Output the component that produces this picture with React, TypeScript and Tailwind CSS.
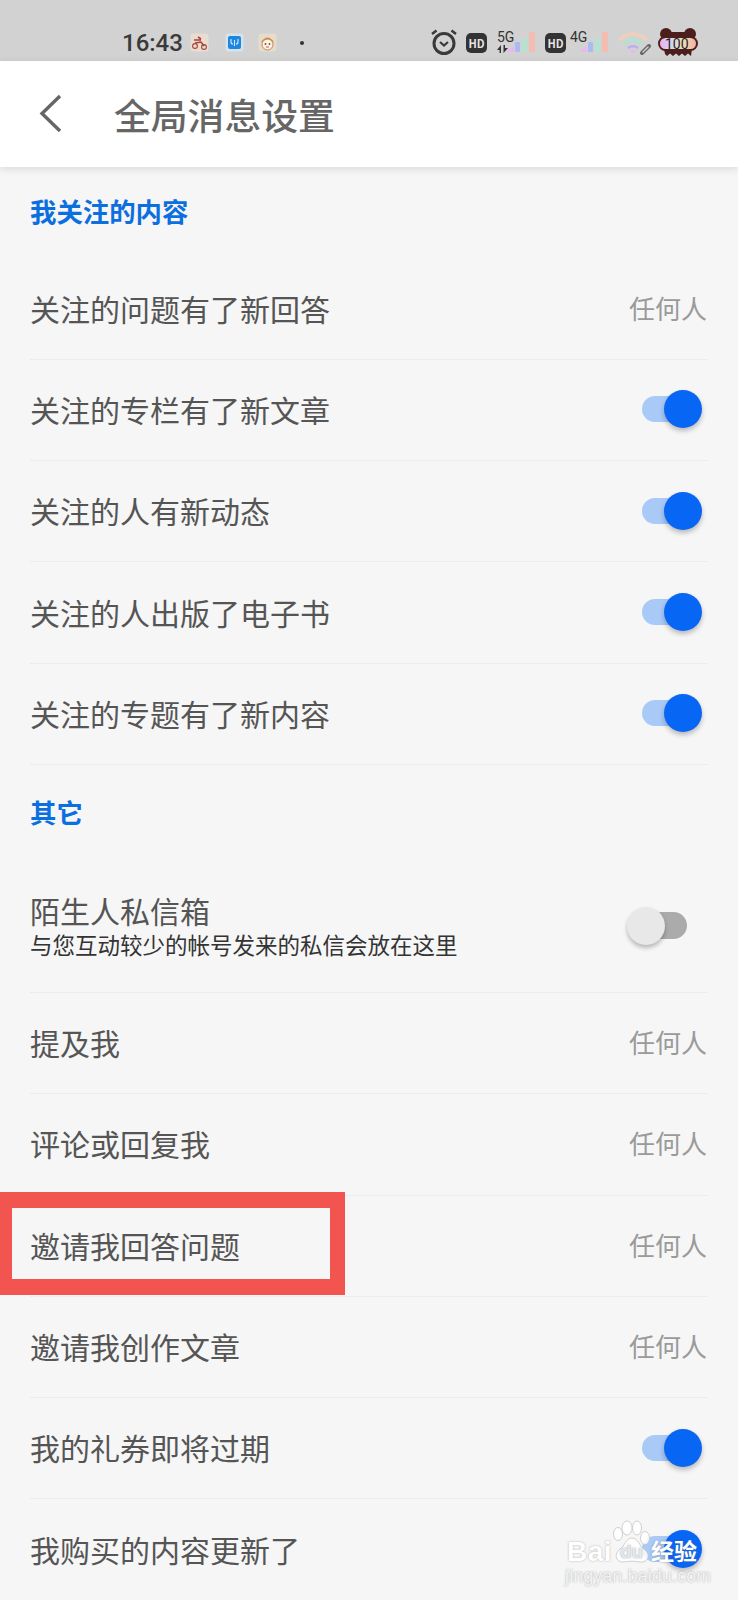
import React from 'react';

type Row = { label: string; value?: string; on?: boolean };

const followRows: Row[] = [
  { label: '关注的问题有了新回答', value: '任何人' },
  { label: '关注的专栏有了新文章', on: true },
  { label: '关注的人有新动态', on: true },
  { label: '关注的人出版了电子书', on: true },
  { label: '关注的专题有了新内容', on: true },
];

const otherRows: Row[] = [
  { label: '提及我', value: '任何人' },
  { label: '评论或回复我', value: '任何人' },
  { label: '邀请我回答问题', value: '任何人' },
  { label: '邀请我创作文章', value: '任何人' },
  { label: '我的礼券即将过期', on: true },
  { label: '我购买的内容更新了', on: true },
];

const SwitchOn = () => (
  <div className="relative w-[60px] h-[38px] flex items-center">
    <div className="w-[48px] h-[26px] rounded-full bg-[#a9c9f7]" />
    <div className="absolute right-0 top-0 w-[38px] h-[38px] rounded-full bg-[#0766f4] shadow-[0_3px_5px_rgba(0,0,0,0.25)]" />
  </div>
);

const SwitchOff = () => (
  <div className="relative w-[60px] h-[38px] flex items-center justify-end">
    <div className="w-[50px] h-[27px] rounded-full bg-[#ababab]" />
    <div className="absolute left-0 top-0 w-[38px] h-[38px] rounded-full bg-[#e8e8e8] shadow-[0_3px_4px_rgba(0,0,0,0.25)]" />
  </div>
);

const SettingRow = ({ label, value, on }: Row) => (
  <div className="h-[101.3px] border-b border-[#ececec] flex items-center justify-between">
    <span className="pb-[2px] text-[30px] leading-none text-[#555555]">{label}</span>
    {value ? <span className="pb-[2px] pr-[1px] text-[26px] leading-none text-[#9a9a9a]">{value}</span> : null}
    {on ? <div className="mr-[6px] -mt-[1px]"><SwitchOn /></div> : null}
  </div>
);

const SectionTitle = ({ text, className }: { text: string; className: string }) => (
  <div className={`flex items-center ${className}`}>
    <span className="text-[26.4px] leading-none font-bold text-[#0b6fe0]">{text}</span>
  </div>
);

const BikeIcon = () => (
  <svg width="19" height="19" viewBox="0 0 19 19" fill="none" stroke="#a8433a">
    <rect x="0.5" y="0.5" width="18" height="18" rx="3" fill="#e9ddd2" stroke="none" />
    <circle cx="5" cy="13" r="2.4" strokeWidth="1.1" />
    <circle cx="14" cy="14" r="2.4" strokeWidth="1.1" />
    <path d="M4 7 H11 M5 10 L11 9 L14 13 M8 4 L11 6" strokeWidth="1.6" />
  </svg>
);

const SignalIcon = () => (
  <svg width="19" height="19" viewBox="0 0 19 19" fill="none" stroke="#d6ecfb">
    <rect x="0.5" y="0.5" width="18" height="18" rx="3" fill="#d5e3ec" stroke="none" />
    <rect x="3" y="3" width="13" height="13" rx="2" fill="#1d86de" stroke="none" />
    <path d="M6 6 V9 Q6 11 8 11 M13 6 V9 Q13 11 11 11 M9.5 7 V13" strokeWidth="1.1" />
  </svg>
);

const FaceIcon = () => (
  <svg width="19" height="19" viewBox="0 0 19 19">
    <rect x="0.5" y="0.5" width="18" height="18" rx="3" fill="#e6dccb" />
    <path d="M3 9 Q9.5 0 16 9 Z" fill="#d78a4c" />
    <circle cx="9.5" cy="11.5" r="5.5" fill="#faf3e8" stroke="#c9824f" strokeWidth="1" />
    <circle cx="7.5" cy="11" r="0.9" fill="#8a4a2a" />
    <circle cx="11.5" cy="11" r="0.9" fill="#8a4a2a" />
    <path d="M8 14 H11" stroke="#c9605a" strokeWidth="1" />
  </svg>
);

const SignalBars = () => (
  <svg width="28" height="20" viewBox="0 0 28 20">
    <path d="M0 19 L7 14 V20 H1 Z" fill="#ecb6f2" />
    <rect x="8" y="10" width="5" height="10" rx="1" fill="#a9bcf2" />
    <rect x="15" y="6" width="5" height="14" rx="1" fill="#b4e4d0" />
    <rect x="22" y="0" width="6" height="20" rx="1" fill="#f4bdb2" />
  </svg>
);

const HdBadge = () => (
  <div className="w-[21px] h-[20px] rounded-[5px] bg-[#333333] flex items-center justify-center text-[11px] leading-none font-bold text-[#e4e4e4]">
    HD
  </div>
);

const StatusBar = () => (
  <div className="h-[61px] bg-[#d2d2d2] flex items-start pl-[122px] pt-[29px]">
    <span className="w-[60px] text-[24px] leading-[28px] font-medium text-[#3a3a3a] font-['Roboto',sans-serif]">16:43</span>
    <div className="ml-[8px] mt-[4px] flex items-center">
      <BikeIcon />
      <div className="w-[16px]" />
      <SignalIcon />
      <div className="w-[14px]" />
      <FaceIcon />
    </div>
    <div className="ml-[23px] mt-[12px] w-[4px] h-[4px] rounded-full bg-[#333333]" />

    {/* right side indicators */}
    <div className="ml-[126px] -mt-[1px]">
      <svg width="28" height="28" viewBox="0 0 28 28" fill="none" stroke="#3a3a3a">
        <circle cx="14" cy="15.5" r="10" strokeWidth="3" />
        <path d="M10 14 L14 17.5 L18 14" strokeWidth="2.2" />
        <path d="M2 6 L6.5 2.5 M26 6 L21.5 2.5" strokeWidth="2.6" />
      </svg>
    </div>
    <div className="ml-[8px] mt-[4px]"><HdBadge /></div>
    <div className="ml-[10px] mt-[1px] w-[10px] relative h-[24px]">
      <span className="absolute left-0 top-0 text-[14px] leading-none text-[#333333] font-['Roboto',sans-serif]">5G</span>
      <svg className="absolute left-0 top-[15px]" width="11" height="8" viewBox="0 0 11 8" fill="#333333">
        <path d="M4 0 V8 H2.6 V5 H0 Z M6.5 0 H8 V3 H11 L6.5 8 Z" />
      </svg>
    </div>
    <div className="mt-[3px]"><SignalBars /></div>
    <div className="ml-[10px] mt-[4px]"><HdBadge /></div>
    <div className="ml-[4px] mt-[1px] w-[10px] h-[24px]">
      <span className="block text-[14px] leading-none whitespace-nowrap text-[#333333] font-['Roboto',sans-serif]">4G</span>
    </div>
    <div className="mt-[3px]"><SignalBars /></div>
    <div className="ml-[10px] mt-[3px]">
      <svg width="34" height="24" viewBox="0 0 34 24" fill="none">
        <path d="M1 8 Q15 -4 29 8" stroke="#efcfbc" strokeWidth="3.6" />
        <path d="M5.5 12 Q15 4.5 24.5 12" stroke="#b2e2d0" strokeWidth="3" />
        <path d="M10 16 Q15 12.5 20 16" stroke="#b8aef0" strokeWidth="2.6" />
        <path d="M12 19 L15 17 L18 19 L15 22 Z" fill="#ecb6f2" />
        <path d="M24 21 L31 14" stroke="#666666" strokeWidth="4" strokeLinecap="round" />
        <path d="M25 20 L30 15" stroke="#d2d2d2" strokeWidth="1.4" strokeLinecap="round" />
      </svg>
    </div>
    <div className="ml-[6px] -mt-[1px] relative w-[40px] h-[28px]">
      <svg className="absolute inset-0" width="40" height="28" viewBox="0 0 40 28">
        <defs>
          <linearGradient id="bearFill" x1="0" x2="1" y1="0" y2="0">
            <stop offset="0" stopColor="#eeb0ee" />
            <stop offset="0.35" stopColor="#cfd8f0" />
            <stop offset="0.6" stopColor="#e8e4b8" />
            <stop offset="1" stopColor="#f4b0a4" />
          </linearGradient>
        </defs>
        <circle cx="8" cy="6" r="6" fill="#4d1f1c" />
        <circle cx="32" cy="6" r="6" fill="#4d1f1c" />
        <rect x="5" y="4" width="30" height="10" fill="#4d1f1c" />
        <rect x="0" y="8" width="40" height="15" rx="7.5" fill="#4d1f1c" />
        <rect x="2" y="10" width="36" height="11" rx="5.5" fill="url(#bearFill)" />
        <path d="M6 21 H34 L33 28 L30 25.5 L27 28 L24 25.5 L21 28 L18 25.5 L15 28 L12 25.5 L9 28 L7 26 Z" fill="#4d1f1c" />
      </svg>
      <span className="absolute left-[7px] top-[8.5px] text-[14px] leading-none text-[#2b2020] font-['Roboto',sans-serif]">100</span>
    </div>
  </div>
);

const Watermark = () => (
  <div className="absolute left-[565px] top-[1518px] w-[135px] h-[66px] text-white pointer-events-none font-['Liberation_Sans',sans-serif] [text-shadow:0_0_2px_rgba(110,110,110,0.6)]">
    <span className="absolute left-[2px] top-[20px] text-[28px] leading-none font-bold tracking-[0.5px] opacity-90">Bai</span>
    <svg className="absolute left-[47px] top-[2px]" width="40" height="44" viewBox="0 0 40 44" fill="#ffffff" fillOpacity="0.85" stroke="#c4c4c4" strokeWidth="0.8">
      <ellipse cx="6" cy="14" rx="4.5" ry="6.5" />
      <ellipse cx="15" cy="8" rx="5" ry="7" />
      <ellipse cx="25" cy="8" rx="4.5" ry="7" />
      <ellipse cx="33" cy="18" rx="4.5" ry="6.5" />
      <path d="M20 18 C14 18 13 26 7 30 C1 35 5 43 12 42 C16 41 24 41 28 42 C36 43 39 35 33 30 C27 26 26 18 20 18 Z" />
    </svg>
    <span className="absolute left-[55px] top-[24px] text-[19px] leading-none font-bold text-[#e3e6ea]">du</span>
    <span className="absolute left-[86px] top-[21px] text-[23px] leading-none font-bold font-['Noto_Sans_CJK_SC',sans-serif]">经验</span>
    <span className="absolute left-0 top-[50px] text-[17.5px] leading-none tracking-[0.3px] text-[#f4f4f4]">jingyan.baidu.com</span>
  </div>
);

export default function App() {
  return (
    <div className="relative h-[1600px] overflow-hidden bg-[#f6f6f6] font-['Noto_Sans_CJK_SC','Noto_Sans',sans-serif]">
      <StatusBar />

      <header className="relative h-[106px] bg-white shadow-[0_2px_8px_rgba(0,0,0,0.12)] flex items-center">
        <svg className="ml-[38px] -mt-[1px]" width="26" height="40" viewBox="0 0 26 40" fill="none" stroke="#666666" strokeWidth="3.4">
          <path d="M22 2 L4 19.5 L22 37" />
        </svg>
        <h1 className="ml-[50px] text-[36.8px] leading-none font-medium text-[#666666]">全局消息设置</h1>
      </header>

      <div className="pl-[30px] pr-[30px]">
        <SectionTitle text="我关注的内容" className="h-[91.5px] pb-[3px]" />
        {followRows.map((row) => (
          <SettingRow key={row.label} {...row} />
        ))}

        <SectionTitle text="其它" className="h-[93px] pt-[1px]" />
        <div className="h-[135px] border-b border-[#ececec] flex items-center justify-between">
          <div className="pt-[1px]">
            <div className="text-[30px] leading-[37px] text-[#555555]">陌生人私信箱</div>
            <div className="text-[22.5px] leading-[30px] text-[#333333]">与您互动较少的帐号发来的私信会放在这里</div>
          </div>
          <div className="mr-[21px] mt-[2px]"><SwitchOff /></div>
        </div>
        {otherRows.map((row) => (
          <SettingRow key={row.label} {...row} />
        ))}
      </div>

      {/* red annotation box drawn over the screenshot */}
      <div className="absolute left-0 top-[1192px] w-[345px] h-[103px] border-[#f2544f] border-y-[16px] border-r-[15px] border-l-[12px]" />

      <Watermark />
    </div>
  );
}
